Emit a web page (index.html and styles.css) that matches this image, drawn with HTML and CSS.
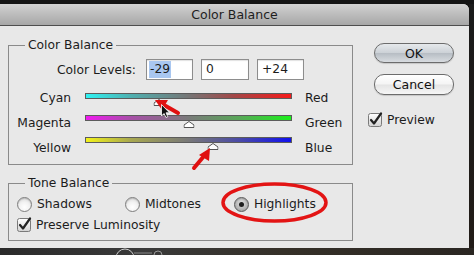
FILE: index.html
```html
<!DOCTYPE html>
<html>
<head>
<meta charset="utf-8">
<link rel="stylesheet" href="styles.css">
</head>
<body>
<div class="screen">
  <div class="dialog">
    <div class="titlebar">Color Balance</div>
    <div class="content">
      <div class="left">
        <fieldset class="group cbal">
          <legend>Color Balance</legend>
          <div class="levels">
            <span class="lvl-label">Color Levels:</span>
            <span class="field f1"><span class="selection">-29</span></span>
            <span class="field f2">0</span>
            <span class="field f3">+24</span>
          </div>
          <div class="srow r1">
            <span class="lab-l">Cyan</span>
            <span class="bar bar-cr">
              <svg class="thumb" style="left:35.5%" width="11" height="7" viewBox="0 0 11 7"><polygon points="5.5,0.5 10.5,4 10.5,6.5 0.5,6.5 0.5,4" fill="#fff" stroke="#555"/></svg>
            </span>
            <span class="lab-r">Red</span>
          </div>
          <div class="srow r2">
            <span class="lab-l">Magenta</span>
            <span class="bar bar-mg">
              <svg class="thumb" style="left:50%" width="11" height="7" viewBox="0 0 11 7"><polygon points="5.5,0.5 10.5,4 10.5,6.5 0.5,6.5 0.5,4" fill="#fff" stroke="#555"/></svg>
            </span>
            <span class="lab-r">Green</span>
          </div>
          <div class="srow r3">
            <span class="lab-l">Yellow</span>
            <span class="bar bar-yb">
              <svg class="thumb" style="left:62%" width="11" height="7" viewBox="0 0 11 7"><polygon points="5.5,0.5 10.5,4 10.5,6.5 0.5,6.5 0.5,4" fill="#fff" stroke="#555"/></svg>
            </span>
            <span class="lab-r">Blue</span>
          </div>
        </fieldset>
        <fieldset class="group tone">
          <legend>Tone Balance</legend>
          <div class="radios">
            <span class="ritem"><span class="radio"></span>Shadows</span>
            <span class="ritem"><span class="radio"></span>Midtones</span>
            <span class="ritem"><span class="radio on"><span class="dot"></span></span>Highlights</span>
          </div>
          <div class="check lum">
            <svg class="cbox" width="16" height="16" viewBox="0 0 16 16"><rect x="0.5" y="1.5" width="13" height="13" rx="2" fill="url(#cbg)" stroke="#7a7a7a"/><path d="M3 8 L6 11.5 L13 1.5" fill="none" stroke="#222" stroke-width="2.2" stroke-linecap="round" stroke-linejoin="round"/></svg>
            <span>Preserve Luminosity</span>
          </div>
        </fieldset>
      </div>
      <div class="right">
        <button class="btn ok">OK</button>
        <button class="btn cancel">Cancel</button>
        <div class="check preview">
          <svg class="cbox" width="16" height="16" viewBox="0 0 16 16"><rect x="0.5" y="1.5" width="13" height="13" rx="2" fill="url(#cbg)" stroke="#7a7a7a"/><path d="M3 8 L6 11.5 L13 1.5" fill="none" stroke="#222" stroke-width="2.2" stroke-linecap="round" stroke-linejoin="round"/></svg>
          <span>Preview</span>
        </div>
      </div>
    </div>
  </div>
  <div class="edge"></div>
</div>
<div class="bottom"></div>

<svg class="defs" width="0" height="0">
  <defs>
    <linearGradient id="cbg" x1="0" y1="0" x2="0" y2="1">
      <stop offset="0" stop-color="#ffffff"/>
      <stop offset="1" stop-color="#d2d2d2"/>
    </linearGradient>
  </defs>
</svg>

<svg class="annot" width="474" height="255" viewBox="0 0 474 255">
  <!-- bottom strip artifacts -->
  <circle cx="125" cy="258" r="9" fill="none" stroke="#cfcfcf" stroke-width="1"/>
  <line x1="134" y1="253" x2="152" y2="253" stroke="#888" stroke-width="1"/>
  <circle cx="158" cy="255" r="4" fill="none" stroke="#999" stroke-width="1"/>
  <!-- red arrow 1 (to cyan thumb) -->
  <line x1="178" y1="113" x2="164" y2="105" stroke="#e01010" stroke-width="4" stroke-linecap="round"/>
  <polygon points="155,100 168,100 162,110" fill="#e01010"/>
  <!-- cursor -->
  <polygon points="161.5,104.5 161.5,116 164,113.5 166,117.5 167.8,116.7 166,112.8 169.5,112.8" fill="#111" stroke="#fff" stroke-width="0.8"/>
  <!-- red arrow 2 (to blue thumb) -->
  <line x1="194" y1="168" x2="204" y2="156" stroke="#e01010" stroke-width="4" stroke-linecap="round"/>
  <polygon points="210,148 209,161 199,155" fill="#e01010"/>
  <!-- red ellipse -->
  <ellipse cx="274.5" cy="202.5" rx="51.5" ry="18.5" fill="none" stroke="#e31414" stroke-width="3.5"/>
</svg>
</body>
</html>
```

FILE: styles.css
```css
* { box-sizing: border-box; }
html, body { margin: 0; padding: 0; }
body {
  width: 474px;
  height: 255px;
  overflow: hidden;
  position: relative;
  background: #141414;
  font-family: "DejaVu Sans", sans-serif;
  font-size: 12.3px;
  color: #1c1c1c;
}
.screen {
  display: flex;
  padding-top: 4px;
  height: 248px;
}
.dialog {
  width: 469px;
  height: 244px;
  display: flex;
  flex-direction: column;
  background: #e8e8e8;
  border-top-right-radius: 6px;
  overflow: hidden;
}
.titlebar {
  height: 22px;
  flex: none;
  background: linear-gradient(#d2d2d2, #bebebe 45%, #a7a7a7);
  border-bottom: 1px solid #4e4e4e;
  text-align: center;
  line-height: 21px;
  font-size: 12.5px;
  color: #1e1e1e;
}
.content {
  flex: 1;
  display: flex;
}
.left {
  width: 353px;
  padding-left: 8px;
  padding-top: 12px;
}
.group {
  margin: 0;
  width: 345px;
  border: 1px solid #8a8a8a;
  padding: 7px 0 3px 0;
  min-width: 0;
}
.group legend {
  margin-left: 16px;
  padding: 0 3px;
  line-height: 14px;
}
.levels {
  display: flex;
  align-items: center;
  height: 21px;
  gap: 8px;
}
.lvl-label {
  width: 127px;
  text-align: right;
  margin-right: 2px;
}
.field {
  height: 21px;
  width: 47px;
  border: 1px solid #8d8d8d;
  background: #fff;
  padding-left: 2px;
  line-height: 19px;
  box-shadow: inset 0 1px 1px rgba(0,0,0,0.12);
}
.f2 { width: 48px; padding-left: 4px; }
.f3 { padding-left: 4px; }
.selection {
  display: inline-block;
  background: #a9c7f0;
  line-height: 17px;
  padding: 0 1px;
}
.srow {
  display: flex;
  align-items: flex-start;
  height: 25px;
}
.srow:first-of-type { margin-top: 6px; }
.r1 { margin-top: 6px; }
.lab-l {
  width: 62px;
  text-align: right;
  margin-top: 5px;
  line-height: 14px;
}
.lab-r {
  margin-left: 13px;
  margin-top: 5px;
  line-height: 14px;
}
.bar {
  position: relative;
  width: 207px;
  height: 6px;
  margin-left: 14px;
  border: 1px solid #5c5c5c;
}
.r1 .bar { margin-top: 7px; }
.r2 .bar { margin-top: 4px; }
.r3 .bar { margin-top: 1px; }
.bar-cr { background: linear-gradient(to right, #2ef2f2, #4fb0b0 22%, #767676 50%, #a24848 72%, #f61a1a); }
.bar-mg { background: linear-gradient(to right, #f01af0, #a850a8 22%, #7a7a7a 50%, #58a858 75%, #1cf01c); }
.bar-yb { background: linear-gradient(to right, #f2f21a, #a8a850 22%, #787878 50%, #4a4aa8 75%, #1010ee); }
.thumb {
  position: absolute;
  top: 5px;
  transform: translateX(-50%);
  display: block;
}
.tone { margin-top: 11px; padding: 6px 0 7px 0; }
.radios {
  display: flex;
  gap: 33px;
  padding-left: 8px;
  height: 16px;
  align-items: center;
}
.ritem {
  display: flex;
  align-items: center;
  gap: 5px;
}
.radio {
  width: 15px;
  height: 15px;
  border-radius: 50%;
  border: 1px solid #7e7e7e;
  background: radial-gradient(circle at 50% 70%, #ffffff 0%, #f2f2f2 45%, #cfcfcf 100%);
  box-shadow: inset 0 1px 1px rgba(0,0,0,0.15);
  display: flex;
  align-items: center;
  justify-content: center;
}
.radio.on {
  border-color: #5a5a5a;
  background: radial-gradient(circle at 50% 40%, #e4e4e4 0%, #b4b4b4 60%, #8c8c8c 100%);
}
.dot {
  width: 5px;
  height: 5px;
  border-radius: 50%;
  background: #1e1e1e;
}
.check {
  display: flex;
  align-items: center;
  gap: 3px;
  height: 16px;
}
.cbox { display: block; flex: none; }
.lum {
  margin-top: 5px;
  padding-left: 8px;
}
.right {
  flex: 1;
  padding-top: 17px;
  padding-left: 15px;
  display: flex;
  flex-direction: column;
  align-items: flex-start;
}
.btn {
  margin: 0 0 0 6px;
  width: 80px;
  height: 20px;
  padding: 0;
  border-radius: 10px;
  border: 1px solid #6c6c6c;
  font-family: inherit;
  font-size: 12.5px;
  color: #111;
  background: linear-gradient(#ffffff, #f4f4f4 48%, #e4e4e4 52%, #f6f6f6);
  box-shadow: 0 1px 1px rgba(0,0,0,0.15);
}
.ok {
  background: linear-gradient(#e6e9ec, #cdd2d7 48%, #b7bdc4 52%, #d8dce0);
}
.cancel {
  margin-top: 11px;
  height: 21px;
}
.preview { margin-top: 17px; }
.edge {
  width: 5px;
  height: 244px;
  background: linear-gradient(#1a1a1a, #221c18);
}
.bottom {
  height: 7px;
  background: linear-gradient(to right, #2a2a2a, #3a3a3a 30%, #353028 60%, #2a2622);
}
.defs { position: absolute; }
.annot {
  position: absolute;
  left: 0;
  top: 0;
  pointer-events: none;
}
```
